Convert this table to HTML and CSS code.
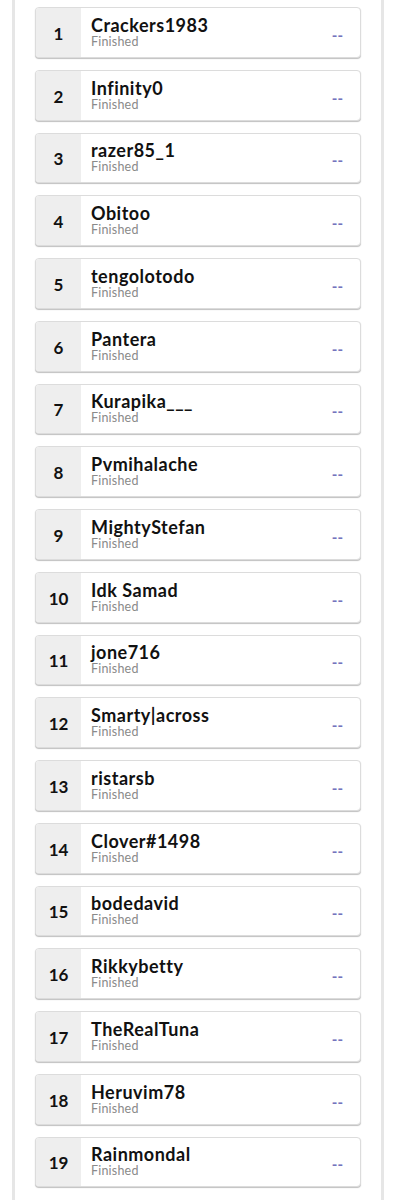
FILE: index.html
```html
<!DOCTYPE html>
<html>
<head>
<meta charset="utf-8">
<link rel="stylesheet" href="styles.css">
</head>
<body>
<div class="panel">
  <ul class="list">
    <li class="row"><div class="rank">1</div><div class="info"><div class="name">Crackers1983</div><div class="status">Finished</div></div><div class="score">--</div></li>
    <li class="row"><div class="rank">2</div><div class="info"><div class="name">Infinity0</div><div class="status">Finished</div></div><div class="score">--</div></li>
    <li class="row"><div class="rank">3</div><div class="info"><div class="name">razer85_1</div><div class="status">Finished</div></div><div class="score">--</div></li>
    <li class="row"><div class="rank">4</div><div class="info"><div class="name">Obitoo</div><div class="status">Finished</div></div><div class="score">--</div></li>
    <li class="row"><div class="rank">5</div><div class="info"><div class="name">tengolotodo</div><div class="status">Finished</div></div><div class="score">--</div></li>
    <li class="row"><div class="rank">6</div><div class="info"><div class="name">Pantera</div><div class="status">Finished</div></div><div class="score">--</div></li>
    <li class="row"><div class="rank">7</div><div class="info"><div class="name">Kurapika___</div><div class="status">Finished</div></div><div class="score">--</div></li>
    <li class="row"><div class="rank">8</div><div class="info"><div class="name">Pvmihalache</div><div class="status">Finished</div></div><div class="score">--</div></li>
    <li class="row"><div class="rank">9</div><div class="info"><div class="name">MightyStefan</div><div class="status">Finished</div></div><div class="score">--</div></li>
    <li class="row"><div class="rank">10</div><div class="info"><div class="name">Idk Samad</div><div class="status">Finished</div></div><div class="score">--</div></li>
    <li class="row"><div class="rank">11</div><div class="info"><div class="name">jone716</div><div class="status">Finished</div></div><div class="score">--</div></li>
    <li class="row"><div class="rank">12</div><div class="info"><div class="name">Smarty|across</div><div class="status">Finished</div></div><div class="score">--</div></li>
    <li class="row"><div class="rank">13</div><div class="info"><div class="name">ristarsb</div><div class="status">Finished</div></div><div class="score">--</div></li>
    <li class="row"><div class="rank">14</div><div class="info"><div class="name">Clover#1498</div><div class="status">Finished</div></div><div class="score">--</div></li>
    <li class="row"><div class="rank">15</div><div class="info"><div class="name">bodedavid</div><div class="status">Finished</div></div><div class="score">--</div></li>
    <li class="row"><div class="rank">16</div><div class="info"><div class="name">Rikkybetty</div><div class="status">Finished</div></div><div class="score">--</div></li>
    <li class="row"><div class="rank">17</div><div class="info"><div class="name">TheRealTuna</div><div class="status">Finished</div></div><div class="score">--</div></li>
    <li class="row"><div class="rank">18</div><div class="info"><div class="name">Heruvim78</div><div class="status">Finished</div></div><div class="score">--</div></li>
    <li class="row"><div class="rank">19</div><div class="info"><div class="name">Rainmondal</div><div class="status">Finished</div></div><div class="score">--</div></li>
  </ul>
</div>
</body>
</html>
```
FILE: styles.css
```css
html, body {
  margin: 0;
  padding: 0;
  background: #ffffff;
  font-family: Lato, "Open Sans", sans-serif;
}
.panel {
  margin: 0 17px 0 12px;
  border-left: 3px solid #e6e6e6;
  border-right: 3px solid #e6e6e6;
  padding: 7px 20px 0 20px;
  min-height: 1200px;
  box-sizing: border-box;
}
.list {
  list-style: none;
  margin: 0;
  padding: 0;
}
.row {
  display: flex;
  align-items: stretch;
  height: 50.75px;
  margin-bottom: 12px;
  border: 1px solid #dcdcdc;
  border-radius: 4px;
  box-shadow: 0 1px 1px rgba(0,0,0,0.25);
  box-sizing: border-box;
  overflow: hidden;
  background: #fff;
}
.rank {
  width: 45px;
  flex: none;
  background: #eeeeee;
  display: flex;
  align-items: center;
  justify-content: center;
  padding-top: 2px;
  box-sizing: border-box;
  font-weight: 700;
  font-size: 17px;
  color: #111;
}
.info {
  flex: 1;
  display: flex;
  flex-direction: column;
  justify-content: center;
  padding: 0 0 1px 10px;
  min-width: 0;
}
.name {
  font-weight: 700;
  font-size: 18px;
  line-height: 20px;
  letter-spacing: 0.5px;
  color: #111;
}
.status {
  font-size: 12.5px;
  line-height: 14px;
  letter-spacing: 0.2px;
  color: #8a8a8a;
}
.score {
  flex: none;
  display: flex;
  align-items: center;
  padding: 5px 17px 0 0;
  font-size: 15px;
  font-weight: 700;
  color: #7474bd;
}
```
